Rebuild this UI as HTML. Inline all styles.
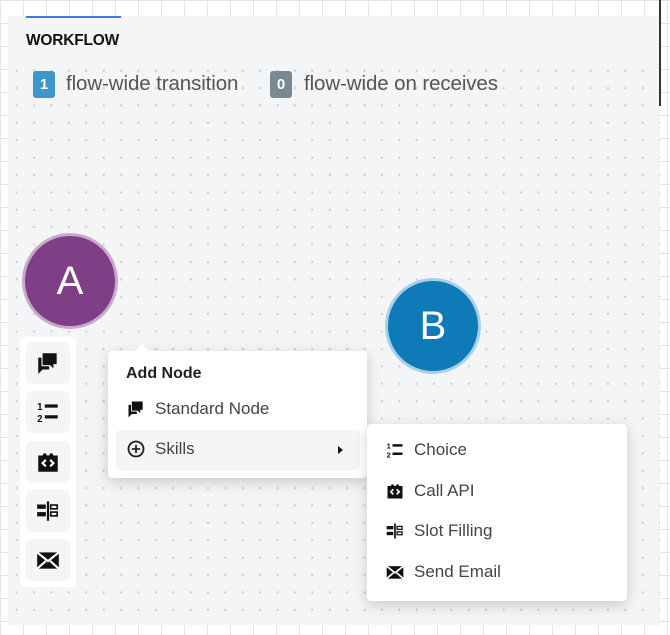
<!DOCTYPE html>
<html><head><style>
body{margin:0;width:670px;height:635px;position:relative;overflow:hidden;font-family:"Liberation Sans",sans-serif;background:#fff;
background-image:linear-gradient(#e4e4e4 1px,transparent 1px),linear-gradient(90deg,#e4e4e4 1px,transparent 1px);background-size:23px 23px;}
.panel{position:absolute;left:8px;top:16px;width:652px;height:609px;background-color:#f4f5f7;}
.dots{position:absolute;left:8px;top:62px;width:652px;height:563px;background-image:radial-gradient(circle,#cdd0d4 1px,transparent 1.3px);background-size:17.4px 17.4px;background-position:0 0;}
.tab{position:absolute;left:26px;top:16px;width:95px;height:2px;background:#3b78e7}
.title{position:absolute;left:26px;top:32px;font-weight:bold;font-size:15.5px;color:#111;letter-spacing:-0.2px}
.badge{position:absolute;top:71px;width:22px;height:27px;border-radius:3px;color:#fff;font-size:15px;font-weight:bold;text-align:center;line-height:27px}
.lbl{position:absolute;top:71px;font-size:20.5px;color:#555;line-height:26px;letter-spacing:-0.1px}
.circ{position:absolute;width:96px;height:96px;border-radius:50%;color:#fff;font-size:40px;text-align:center;line-height:90px;box-sizing:border-box}
.tb{position:absolute;left:20px;top:337px;width:56px;height:250px;background:#fff;border-radius:5px}
.btn{position:absolute;left:6px;width:44px;height:42px;background:#f4f5f7;border-radius:6px;display:flex;align-items:center;justify-content:center}
.menu{position:absolute;background:#fff;border-radius:4px;box-shadow:0 4px 14px rgba(0,0,0,.18)}
.item{position:absolute;font-size:17px;color:#444;display:flex;align-items:center}
.item svg{margin-right:9px}
</style></head><body>
<div class="panel"></div><div class="dots"></div>
<div style="position:absolute;left:659px;top:0;width:2px;height:106px;background:#333"></div>
<div class="tab"></div>
<div class="title">WORKFLOW</div>
<div class="badge" style="left:33px;background:#3d97cd">1</div>
<div class="lbl" style="left:66px">flow-wide transition</div>
<div class="badge" style="left:270px;background:#7a8892">0</div>
<div class="lbl" style="left:304px">flow-wide on receives</div>
<div class="circ" style="left:22px;top:233px;background:#7f3f86;border:3px solid #c8a9c9">A</div>
<div class="circ" style="left:385px;top:278px;background:#0e7bb8;border:3px solid #a8cfea">B</div>
<svg width="0" height="0" style="position:absolute"><defs>
<g id="chat"><path d="M7 3h13v10h-3v4l-3-3H7z" fill="#111"/><path d="M3 7h3v8h7v3H7l-4 4z" fill="#111"/></g>
<g id="list"><text x="2" y="10" font-size="9" font-family="Liberation Sans" font-weight="bold" fill="#111">1</text><text x="2" y="21" font-size="9" font-family="Liberation Sans" font-weight="bold" fill="#111">2</text><rect x="9" y="5" width="12" height="3" fill="#111"/><rect x="9" y="15" width="12" height="3" fill="#111"/></g>
<g id="api"><path d="M3 6h4l1-2h2l1 2h2l1-2h2l1 2h4v15H3z" fill="#111"/><path d="M10 10l-3 3 3 3M14 10l3 3-3 3" stroke="#fff" stroke-width="2" fill="none"/></g>
<g id="slot"><rect x="2" y="6" width="8" height="4" fill="#111"/><rect x="2" y="13" width="8" height="4" fill="#111"/><rect x="11" y="3" width="2" height="18" fill="#111"/><rect x="14.5" y="6.5" width="6" height="3.5" fill="none" stroke="#111" stroke-width="1.5"/><rect x="14.5" y="13" width="6" height="3.5" fill="none" stroke="#111" stroke-width="1.5"/></g>
<g id="mail"><rect x="2" y="5" width="20" height="15" fill="#111"/><path d="M2 5l10 8 10-8M2 20l8-7M22 20l-8-7" stroke="#fff" stroke-width="2" fill="none"/></g>
</defs></svg>
<div class="tb">
<div class="btn" style="top:5px"><svg width="26" height="26" viewBox="0 0 24 24"><use href="#chat"/></svg></div>
<div class="btn" style="top:54px"><svg width="26" height="26" viewBox="0 0 24 24"><use href="#list"/></svg></div>
<div class="btn" style="top:104px"><svg width="26" height="26" viewBox="0 0 24 24"><use href="#api"/></svg></div>
<div class="btn" style="top:153px"><svg width="26" height="26" viewBox="0 0 24 24"><use href="#slot"/></svg></div>
<div class="btn" style="top:202px"><svg width="26" height="26" viewBox="0 0 24 24"><use href="#mail"/></svg></div>
</div>
<div class="menu" style="left:108px;top:351px;width:259px;height:127px">
<div style="position:absolute;left:26px;top:-7px;width:0;height:0;border-left:8px solid transparent;border-right:8px solid transparent;border-bottom:8px solid #fff"></div>
<div style="position:absolute;left:18px;top:14px;font-weight:bold;font-size:16px;color:#222">Add Node</div>
<div class="item" style="left:18px;top:48px"><svg width="20" height="20" viewBox="0 0 24 24"><use href="#chat"/></svg>Standard Node</div>
<div style="position:absolute;left:8px;top:79px;width:244px;height:40px;background:#f4f5f7;border-radius:5px"></div>
<div class="item" style="left:18px;top:88px"><svg width="20" height="20" viewBox="0 0 24 24"><circle cx="12" cy="12" r="9" fill="none" stroke="#222" stroke-width="2.2"/><path d="M12 7v10M7 12h10" stroke="#222" stroke-width="2.2"/></svg>Skills</div>
<div style="position:absolute;left:230px;top:95px;border-top:4px solid transparent;border-bottom:4px solid transparent;border-left:5px solid #111"></div>
</div>
<div class="menu" style="left:367px;top:424px;width:260px;height:177px">
<div class="item" style="left:18px;top:16px"><svg width="20" height="20" viewBox="0 0 24 24"><use href="#list"/></svg>Choice</div>
<div class="item" style="left:18px;top:57px"><svg width="20" height="20" viewBox="0 0 24 24"><use href="#api"/></svg>Call API</div>
<div class="item" style="left:18px;top:97px"><svg width="20" height="20" viewBox="0 0 24 24"><use href="#slot"/></svg>Slot Filling</div>
<div class="item" style="left:18px;top:138px"><svg width="20" height="20" viewBox="0 0 24 24"><use href="#mail"/></svg>Send Email</div>
</div>
</body></html>
